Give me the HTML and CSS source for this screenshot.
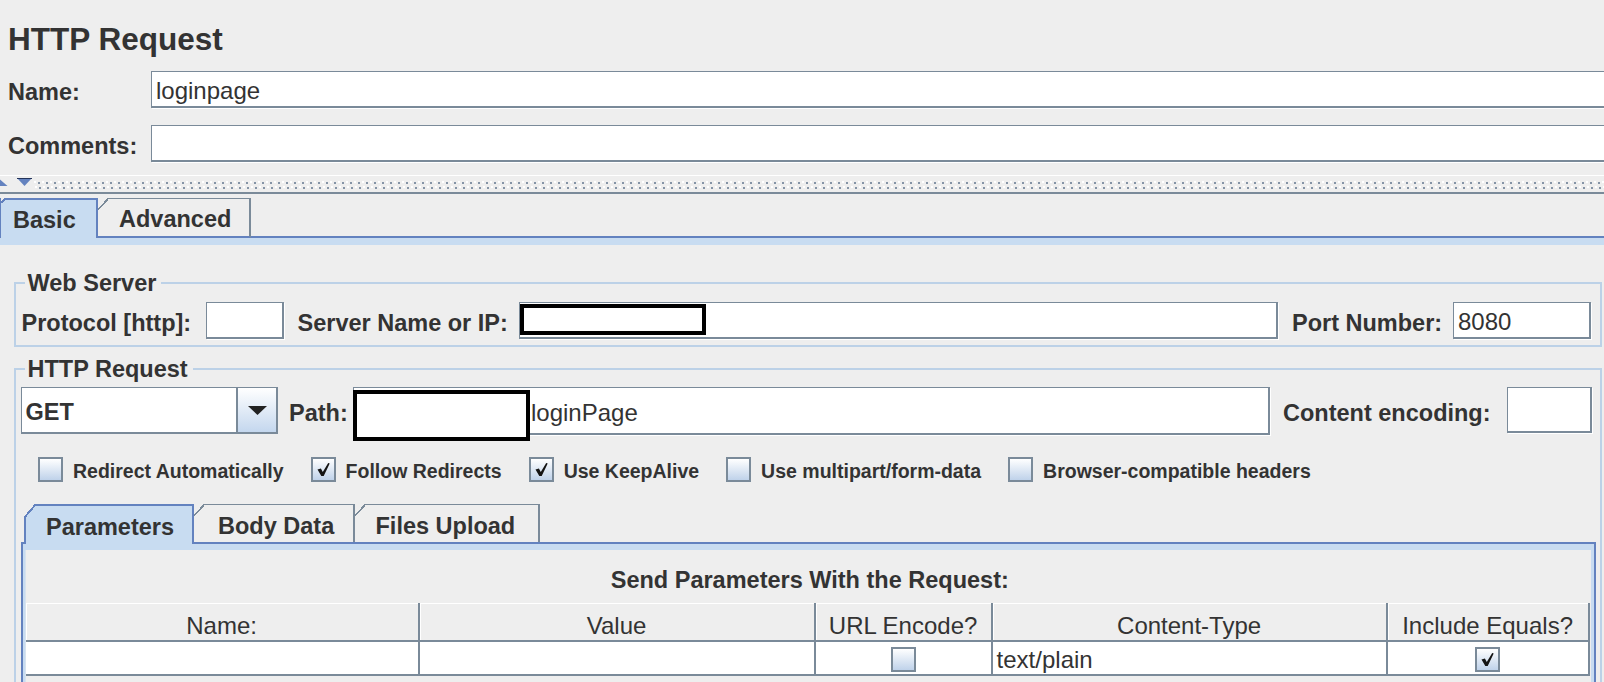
FILE: index.html
```html
<!DOCTYPE html>
<html lang="en">
<head>
<meta charset="utf-8">
<title>HTTP Request</title>
<link rel="stylesheet" href="styles.css">
</head>
<body>
<div class="page">
  <h1 class="title">HTTP Request</h1>

  <div class="form-row name-row">
    <div class="form-label">Name:</div>
    <div class="text-field wide">loginpage</div>
  </div>
  <div class="form-row comments-row">
    <div class="form-label">Comments:</div>
    <div class="text-field wide"></div>
  </div>

  <div class="splitter">
    <svg class="split-arrows" width="34" height="10" viewBox="0 0 34 10" aria-hidden="true">
      <polygon points="0,1.5 7.5,8 0,8" fill="#6382bf"/>
      <polygon points="17,0 32,0 24.5,8" fill="#6382bf"/>
      <line x1="17" y1="0.5" x2="32" y2="0.5" stroke="#24345a" stroke-width="1"/>
    </svg>
    <div class="bumps"></div>
  </div>

  <div class="tabstrip">
    <div class="tab tab-basic is-selected">Basic</div>
    <div class="tab tab-advanced">Advanced</div>
    <div class="tab-rest"></div>
  </div>
  <div class="tab-band"></div>

  <fieldset class="group group-web">
    <legend>Web Server</legend>
    <div class="web-row">
      <span class="field-label first">Protocol [http]:</span>
      <div class="text-field"></div>
      <span class="field-label">Server Name or IP:</span>
      <div class="text-field"><span class="redact redact-server"></span></div>
      <span class="field-label">Port Number:</span>
      <div class="text-field">8080</div>
    </div>
  </fieldset>

  <fieldset class="group group-http">
    <legend>HTTP Request</legend>
    <div class="req-row">
      <div class="combo">
        <div class="combo-value">GET</div>
        <div class="combo-button">
          <svg width="19" height="9" viewBox="0 0 19 9" aria-hidden="true"><polygon points="0,0 19,0 9.5,9" fill="#222"/></svg>
        </div>
      </div>
      <span class="field-label">Path:</span>
      <div class="text-field f-path"><span class="redact redact-path"></span><span class="path-text">loginPage</span></div>
      <span class="field-label">Content encoding:</span>
      <div class="text-field f-encoding"></div>
    </div>

    <div class="check-row">
      <div class="check"><span class="box"></span><span class="check-text">Redirect Automatically</span></div>
      <div class="check"><span class="box"><svg viewBox="0 0 21 21" width="21" height="21" aria-hidden="true"><path d="M4.5 10.6 L7.9 9.4 L9.8 13 L15.2 4 L16.7 4.6 L10.7 17 L8.3 17 Z" fill="#141414"/></svg></span><span class="check-text">Follow Redirects</span></div>
      <div class="check"><span class="box"><svg viewBox="0 0 21 21" width="21" height="21" aria-hidden="true"><path d="M4.5 10.6 L7.9 9.4 L9.8 13 L15.2 4 L16.7 4.6 L10.7 17 L8.3 17 Z" fill="#141414"/></svg></span><span class="check-text">Use KeepAlive</span></div>
      <div class="check"><span class="box"></span><span class="check-text">Use multipart/form-data</span></div>
      <div class="check"><span class="box"></span><span class="check-text">Browser-compatible headers</span></div>
    </div>

    <div class="subtabs">
      <div class="subtab st-params is-selected">Parameters</div>
      <div class="subtab st-body">Body Data</div>
      <div class="subtab st-files">Files Upload</div>
    </div>
    <div class="subpanel">
      <div class="panel-title">Send Parameters With the Request:</div>
      <table class="params">
        <colgroup>
          <col class="c-name"><col class="c-value"><col class="c-url"><col class="c-type"><col class="c-eq">
        </colgroup>
        <thead>
          <tr><th>Name:</th><th>Value</th><th>URL Encode?</th><th>Content-Type</th><th>Include Equals?</th></tr>
        </thead>
        <tbody>
          <tr>
            <td></td>
            <td></td>
            <td class="cell-center"><span class="box"></span></td>
            <td>text/plain</td>
            <td class="cell-center"><span class="box"><svg viewBox="0 0 21 21" width="21" height="21" aria-hidden="true"><path d="M4.5 10.6 L7.9 9.4 L9.8 13 L15.2 4 L16.7 4.6 L10.7 17 L8.3 17 Z" fill="#141414"/></svg></span></td>
          </tr>
        </tbody>
      </table>
    </div>
  </fieldset>
</div>
</body>
</html>
```

FILE: styles.css
```css
* { box-sizing: border-box; }

html, body {
  margin: 0;
  padding: 0;
  overflow: hidden;
}

body {
  width: 1604px;
  height: 682px;
  background: #eeeeee;
  color: #333333;
  font-family: "Liberation Sans", Arial, sans-serif;
}

.page {
  width: 1604px;
  height: 682px;
  overflow: hidden;
}

.title {
  margin: 0;
  height: 57px;
  padding: 21px 0 0 8px;
  font-size: 31.5px;
  line-height: 36px;
  font-weight: bold;
}

/* Name / Comments rows */
.form-row {
  display: flex;
  height: 37px;
}
.name-row { margin-top: 14px; }
.comments-row { margin-top: 17px; }

.form-label {
  flex: none;
  width: 151px;
  padding: 6px 0 0 8px;
  display: flex;
  align-items: center;
  font-size: 23.5px;
  font-weight: bold;
  white-space: nowrap;
}

.text-field {
  position: relative;
  display: flex;
  align-items: center;
  padding: 4px 0 0 4px;
  background: #ffffff;
  border-style: solid;
  border-color: #7a8a99;
  border-width: 1px 2px 2px 1px;
  box-shadow: 1px 1px 0 #ffffff;
  font-size: 24px;
  white-space: nowrap;
}
.text-field.wide {
  flex: none;
  width: 1480px;
}

/* split pane divider */
.splitter {
  position: relative;
  margin-top: 13px;
  height: 19px;
  padding: 5px 0 0 34px;
  border-top: 1px solid #ffffff;
  border-bottom: 2px solid #7a8a99;
}
.split-arrows {
  position: absolute;
  left: 0;
  top: 2px;
}
.bumps {
  height: 8px;
  background-image:
    linear-gradient(90deg, #ffffff 2px, transparent 2px),
    linear-gradient(90deg, transparent 4px, #8594a6 4px, #8594a6 6px, transparent 6px),
    linear-gradient(90deg, transparent 1px, #ffffff 1px, #ffffff 3px, transparent 3px),
    linear-gradient(90deg, transparent 5px, #8594a6 5px, #8594a6 7px, transparent 7px);
  background-size: 8px 2px;
  background-repeat: repeat-x;
  background-position: 0 0, 0 1px, 0 5px, 0 6px;
}

/* main tabs */
.tabstrip {
  display: flex;
  height: 40px;
  margin-top: 4px;
}
.tab {
  position: relative;
  flex: none;
  height: 40px;
  padding-top: 3px;
  font-size: 23.5px;
  font-weight: bold;
  line-height: 34px;
  white-space: nowrap;
  border-top: 1.5px solid #7a8a99;
  border-right: 2px solid #7a8a99;
  border-bottom: 2px solid #6382bf;
}
.tab::before {
  content: "";
  position: absolute;
  left: 0;
  top: -1.5px;
  width: 11px;
  height: 12px;
  background: linear-gradient(to bottom right, #eeeeee calc(50% - 1px), #7a8a99 calc(50% - 1px), #7a8a99 calc(50% + 0.6px), transparent calc(50% + 0.6px));
}
.tab.is-selected {
  background: #c8dcf1;
  border-top: 2px solid #6382bf;
  border-right-color: #6382bf;
  border-bottom: 0;
  padding-bottom: 2px;
}
.tab.is-selected::before {
  top: -2px;
  width: 5px;
  height: 5px;
  background: linear-gradient(to bottom right, #eeeeee calc(50% - 1px), #6382bf calc(50% - 1px), #6382bf calc(50% + 0.8px), transparent calc(50% + 0.8px));
}
.tab-basic {
  width: 98px;
  padding-left: 12px;
  border-left: 1px solid #6382bf;
}
.tab-advanced {
  width: 153px;
  padding-left: 21px;
}
.tab-rest {
  flex: 1;
  border-bottom: 2px solid #6382bf;
}
.tab-band {
  height: 7px;
  background: #c8dcf1;
}

/* titled groups */
.group {
  min-width: 0;
  margin: 0 2px 0 14px;
  padding: 6px 9px 6px 4.5px;
  border: 2px solid #bcd1e7;
}
.group legend {
  margin-left: 4px;
  padding: 1px 5px 0 3px;
  font-size: 23.5px;
  font-weight: bold;
  line-height: 25px;
}
.group-web { margin-top: 25px; }
.group-http {
  margin-top: 9px;
  padding: 5px 8px 40px 4.5px;
}

.field-label {
  display: flex;
  align-items: center;
  font-size: 23.5px;
  font-weight: bold;
  white-space: nowrap;
}

.web-row {
  display: grid;
  grid-template-columns: 185px 78px 235px 1fr 175px 138px;
  height: 37px;
}
.web-row .field-label { padding: 5px 0 0 14px; }
.web-row .field-label.first { padding-left: 1px; }

.redact {
  position: absolute;
  border: 4px solid #000000;
  background: #ffffff;
}
.redact-server {
  left: 0;
  top: 1px;
  width: 186px;
  height: 31px;
}
.redact-path {
  left: -1px;
  top: 2px;
  width: 177px;
  height: 51px;
}
.path-text { padding-left: 173px; }

.req-row {
  display: grid;
  grid-template-columns: 257.5px 75px 1fr 237px 85px;
  align-items: start;
  height: 48px;
}
.req-row .field-label {
  height: 47px;
  padding: 6px 0 0 11px;
}
.req-row .field-label:nth-of-type(2) { padding-left: 13px; }
.f-path { height: 48px; padding-top: 5px; }
.f-encoding { height: 46px; }

.combo {
  display: flex;
  height: 47px;
  background: #ffffff;
  border-style: solid;
  border-color: #7a8a99;
  border-width: 1px 2px 2px 1px;
}
.combo-value {
  flex: 1;
  display: flex;
  align-items: center;
  padding: 5px 0 0 4px;
  border-right: 2px solid #7a8a99;
  font-size: 23.5px;
  font-weight: bold;
}
.combo-button {
  width: 38px;
  display: flex;
  align-items: center;
  justify-content: center;
  background: linear-gradient(#ffffff, #c4d7ee);
}

/* checkboxes */
.check-row {
  display: flex;
  align-items: center;
  gap: 27px;
  height: 25px;
  margin-top: 22px;
  padding-left: 17.5px;
}
.check {
  display: flex;
  align-items: center;
  white-space: nowrap;
}
.check-text {
  padding-top: 3px;
  font-size: 19.5px;
  font-weight: bold;
}
.box {
  flex: none;
  display: inline-flex;
  align-items: center;
  justify-content: center;
  width: 25px;
  height: 25px;
  border: 2px solid #7a8a99;
  background: linear-gradient(#ffffff, #bfd2ea);
  vertical-align: middle;
}
.check .box { margin-right: 10px; }

/* inner tabs */
.subtabs {
  display: flex;
  height: 38px;
  margin: 22px 0 0 3.5px;
}
.subtab {
  position: relative;
  flex: none;
  height: 38px;
  padding-top: 4px;
  font-size: 23.5px;
  font-weight: bold;
  line-height: 34px;
  white-space: nowrap;
  border-top: 1.5px solid #7a8a99;
  border-right: 2px solid #7a8a99;
}
.subtab::before {
  content: "";
  position: absolute;
  left: 0;
  top: -1.5px;
  width: 11px;
  height: 12px;
  background: linear-gradient(to bottom right, #eeeeee calc(50% - 1px), #7a8a99 calc(50% - 1px), #7a8a99 calc(50% + 0.6px), transparent calc(50% + 0.6px));
}
.subtab.is-selected {
  z-index: 1;
  height: 40px;
  margin-bottom: -2px;
  background: #c8dcf1;
  border: 2px solid #6382bf;
  border-bottom: 0;
}
.subtab.is-selected::before {
  left: -2px;
  top: -2px;
  width: 12px;
  height: 14px;
  background: linear-gradient(to bottom right, #eeeeee calc(50% - 1px), #6382bf calc(50% - 1px), #6382bf calc(50% + 1px), transparent calc(50% + 1px));
}
.st-params { width: 170px; padding-left: 20px; }
.st-body { width: 161px; padding-left: 24px; }
.st-files { width: 184.5px; padding-left: 20.5px; }

.subpanel {
  position: relative;
  margin: 0 -4px 0 0.5px;
  padding: 0 0 30px 2.6px;
  border: 2px solid #6382bf;
  border-bottom: 0;
  box-shadow: inset 0 6px 0 #c8dcf1, inset 2.6px 0 0 #c8dcf1, inset -3px 0 0 #c8dcf1;
}
.panel-title {
  height: 59px;
  padding-top: 23px;
  text-align: center;
  font-size: 23.5px;
  font-weight: bold;
  line-height: 27px;
}

/* parameter table */
.params {
  width: 1564px;
  table-layout: fixed;
  border-collapse: separate;
  border-spacing: 0;
  font-size: 24px;
  color: #333333;
}
.c-name { width: 394px; }
.c-value { width: 396px; }
.c-url { width: 177px; }
.c-type { width: 395px; }
.c-eq { width: 202px; }

.params th {
  height: 39px;
  padding: 8px 0 0;
  font-weight: normal;
  text-align: center;
  background: #eeeeee;
  border-right: 2px solid #7a8a99;
  border-bottom: 2px solid #7a8a99;
  box-shadow: inset 1px 1px 0 #ffffff;
}
.params td {
  height: 33px;
  padding: 4px 0 0 4px;
  background: #ffffff;
  border-right: 2px solid #7a8a99;
  border-bottom: 2px solid #7a8a99;
  white-space: nowrap;
}
.params td.cell-center {
  padding: 0;
  text-align: center;
}
```
